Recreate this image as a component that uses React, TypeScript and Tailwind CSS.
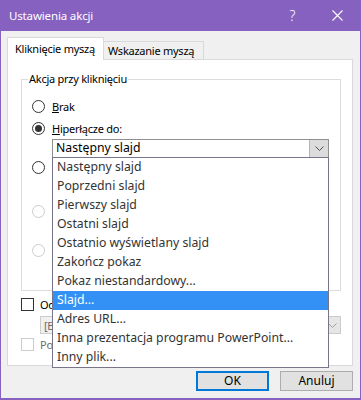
const ui = "font-['Noto_Sans',sans-serif]";
const label = "text-[11px] tracking-[-0.25px] leading-none";

const actions = [
  "Następny slajd",
  "Poprzedni slajd",
  "Pierwszy slajd",
  "Ostatni slajd",
  "Ostatnio wyświetlany slajd",
  "Zakończ pokaz",
  "Pokaz niestandardowy...",
  "Slajd...",
  "Adres URL...",
  "Inna prezentacja programu PowerPoint...",
  "Inny plik...",
];

export default function App() {
  return (
    <div className={`flex h-[400px] w-[361px] flex-col bg-[#8661c0] px-px pb-[2px] ${ui}`}>
      <TitleBar />
      <div className="flex flex-1 flex-col bg-[#f0f0f0] px-[6px] pt-[6px]">
        <div className="flex items-end">
          <div className="relative z-10 -mb-px flex h-[23px] w-[97px] items-center border border-b-0 border-[#d9d9d9] bg-white pl-[7px] pb-[2px]">
            <span className={`${label} text-black`}>Kliknięcie myszą</span>
          </div>
          <div className="flex h-[18px] w-[100px] items-center border border-b-0 border-l-0 border-[#d9d9d9] bg-[#f0f0f0] pl-[4px]">
            <span className={`${label} text-black`}>Wskazanie myszą</span>
          </div>
        </div>
        <div className="flex h-[307px] w-[346px] flex-col border border-[#d9d9d9] bg-white">
          <GroupBox />
          <div className="ml-[13px] mt-[7px]">
            <Check text="Odtwórz dźwięk:" />
          </div>
          <div className="ml-[32px] mt-[5px] flex h-[18px] w-[301px] items-center border border-[#cccccc] bg-[#f0f0f0]">
            <span className={`${label} pl-[3px] text-[#6d6d6d]`}>[Brak dźwięku]</span>
            <span className="ml-auto flex h-full w-[17px] items-center justify-center border-l border-[#cccccc] bg-[#e6e6e6]">
              <Chevron color="#a0a0a0" />
            </span>
          </div>
          <div className="ml-[13px] mt-[4px]">
            <Check text="Podświetl po kliknięciu" disabled />
          </div>
        </div>
        <div className="mt-[5px] flex w-[346px] justify-end gap-[11px]">
          <button className="flex h-[20px] w-[73px] items-center justify-center border-2 border-[#0078d7] bg-[#e1e1e1]">
            <span className="text-[12px] leading-none text-black">OK</span>
          </button>
          <button className="flex h-[20px] w-[73px] items-center justify-center border border-[#adadad] bg-[#e1e1e1]">
            <span className="text-[12px] leading-none text-black">Anuluj</span>
          </button>
        </div>
      </div>
    </div>
  );
}

function TitleBar() {
  return (
    <div className="flex h-[31px] shrink-0 items-center pl-[8px] text-white">
      <span className="text-[11.5px] tracking-[-0.15px]">Ustawienia akcji</span>
      <span className="ml-auto flex h-full w-[45px] items-center justify-center text-[14px] font-light">?</span>
      <span className="flex h-full w-[45px] items-center justify-center">
        <svg width="11" height="11" viewBox="0 0 11 11" fill="none" stroke="white" strokeWidth="1.1">
          <path d="M0.5 0.5 L10.5 10.5 M10.5 0.5 L0.5 10.5" />
        </svg>
      </span>
    </div>
  );
}

function GroupBox() {
  return (
    <div className="relative ml-[13px] mt-[19px] flex h-[212px] w-[320px] flex-col border border-[#dcdcdc] pl-[10px] pt-[18px]">
      <span className={`${label} absolute left-[6px] top-[-7px] bg-white px-[1px] text-black`}>Akcja przy kliknięciu</span>
      <Radio>
        <u>B</u>rak
      </Radio>
      <div className="mt-[6px]">
        <Radio checked>
          <u>H</u>iperłącze do:
        </Radio>
      </div>
      <div className="relative ml-[20px] mt-[3px] flex h-[19px] w-[277px] items-center border border-[#8f8f8f] bg-white">
        <span className="pl-[3px] text-[12.25px] leading-none text-black">Następny slajd</span>
        <span className="ml-auto flex h-full w-[19px] items-center justify-center border-l border-[#b4b4b4] bg-[#dcdcdc]">
          <Chevron color="#505050" />
        </span>
        <ul className="absolute left-[-1px] top-[17px] z-20 w-[277px] border border-[#78748a] bg-white">
          {actions.map((a) => (
            <li
              key={a}
              className={`flex h-[19px] items-center pl-[4px] text-[12.25px] leading-none ${a === "Slajd..." ? "bg-[#3391f5] text-white" : "text-[#333333]"}`}
            >
              {a}
            </li>
          ))}
        </ul>
      </div>
      <div className="mt-[1px]">
        <Radio />
      </div>
      <div className="mt-[28px]">
        <Radio disabled />
      </div>
      <div className="mt-[23px]">
        <Radio disabled />
      </div>
    </div>
  );
}

function Radio({ checked, disabled, children }: { checked?: boolean; disabled?: boolean; children?: React.ReactNode }) {
  return (
    <div className="flex h-[16px] items-center gap-[7px]">
      <span
        className={`flex h-[13px] w-[13px] items-center justify-center rounded-full border bg-white ${disabled ? "border-[#cccccc]" : "border-[#333333]"}`}
      >
        {checked && <span className="h-[7px] w-[7px] rounded-full bg-[#333333]" />}
      </span>
      {children && <span className={`${label} text-black`}>{children}</span>}
    </div>
  );
}

function Check({ text, disabled }: { text: string; disabled?: boolean }) {
  return (
    <div className="flex h-[13px] items-center gap-[6px]">
      <span className={`h-[13px] w-[13px] border bg-white ${disabled ? "border-[#cccccc]" : "border-[#333333]"}`} />
      <span className={`${label} ${disabled ? "text-[#6d6d6d]" : "text-black"}`}>{text}</span>
    </div>
  );
}

function Chevron({ color }: { color: string }) {
  return (
    <svg width="9" height="5" viewBox="0 0 9 5" fill="none" stroke={color} strokeWidth="1">
      <path d="M0.5 0.5 L4.5 4.5 L8.5 0.5" />
    </svg>
  );
}
